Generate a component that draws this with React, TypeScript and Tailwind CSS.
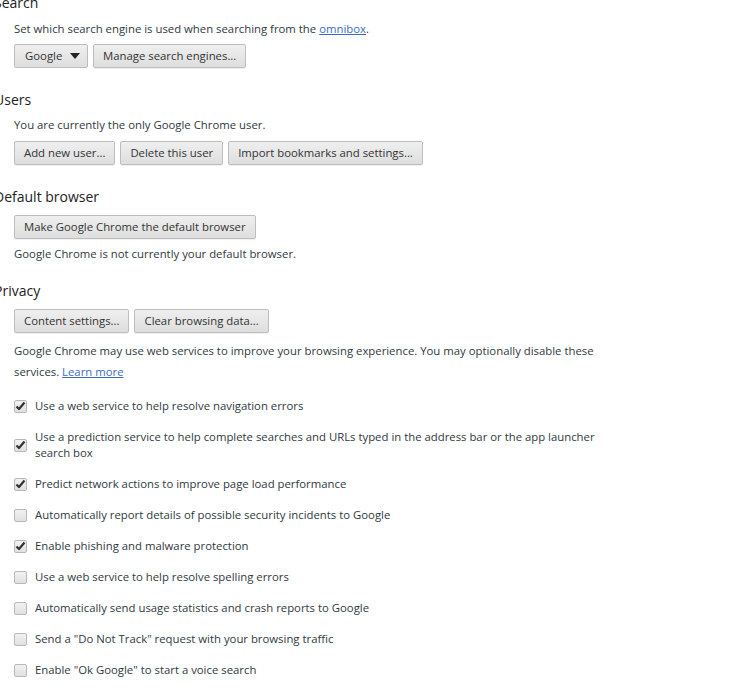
import type { ReactNode } from "react"

const Btn = ({ children }: { children: ReactNode }) => (
    <button className="h-6 px-[9px] rounded-[2px] border border-[#bdbdbd] bg-gradient-to-b from-[#efefef] to-[#dedede] text-[#333] shadow-[0_1px_0_rgba(0,0,0,0.06)] leading-none whitespace-nowrap">
        {children}
    </button>
)

const Heading = ({ children, className = "" }: { children: ReactNode; className?: string }) => (
    <h3 className={`ml-[-6px] text-[14px] leading-5 text-[#222] ${className}`}>{children}</h3>
)

const Check = ({ on }: { on: boolean }) => (
    <span className="shrink-0 w-[13px] h-[13px] rounded-[2px] border border-[#b8b8b8] bg-gradient-to-b from-[#f2f2f2] to-[#e0e0e0] flex items-center justify-center">
        {on && (
            <svg width="11" height="10" viewBox="0 0 11 10">
                <path d="M1.5 5.5 L4 8 L9.5 1.5" fill="none" stroke="#333" strokeWidth="2.2" strokeLinejoin="round" />
            </svg>
        )}
    </span>
)

const options: { on: boolean; label: ReactNode }[] = [
    { on: true, label: "Use a web service to help resolve navigation errors" },
    {
        on: true,
        label: (
            <>
                Use a prediction service to help complete searches and URLs typed in the address bar or the app launcher
                <br />
                search box
            </>
        ),
    },
    { on: true, label: "Predict network actions to improve page load performance" },
    { on: false, label: "Automatically report details of possible security incidents to Google" },
    { on: true, label: "Enable phishing and malware protection" },
    { on: false, label: "Use a web service to help resolve spelling errors" },
    { on: false, label: "Automatically send usage statistics and crash reports to Google" },
    { on: false, label: 'Send a "Do Not Track" request with your browsing traffic' },
    { on: false, label: 'Enable "Ok Google" to start a voice search' },
]

export default function App() {
    return (
        <div className="w-[737px] h-[693px] overflow-hidden bg-white text-[11.35px] text-[#303942] font-['Open_Sans',sans-serif]">
            <div className="mt-[-7px]">
                <Heading>Search</Heading>
                <div className="ml-[14px]">
                    <p className="mt-[8px] leading-4">
                        Set which search engine is used when searching from the{" "}
                        <a className="text-[#3b6cc4] underline">omnibox</a>.
                    </p>
                    <div className="mt-[7px] flex gap-[5px]">
                        <button className="h-6 w-[74px] pl-[10px] pr-[4px] rounded-[2px] border border-[#bdbdbd] bg-gradient-to-b from-[#efefef] to-[#dedede] text-[#333] flex items-center justify-between">
                            Google
                            <svg width="10" height="6" viewBox="0 0 10 6" className="mr-[3px]">
                                <path d="M0 0 H10 L5 6 Z" fill="#222" />
                            </svg>
                        </button>
                        <Btn>Manage search engines...</Btn>
                    </div>
                </div>

                <Heading className="mt-[22px]">Users</Heading>
                <div className="ml-[14px]">
                    <p className="mt-[7px] leading-4">You are currently the only Google Chrome user.</p>
                    <div className="mt-[8px] flex gap-[5px]">
                        <Btn>Add new user...</Btn>
                        <Btn>Delete this user</Btn>
                        <Btn>Import bookmarks and settings...</Btn>
                    </div>
                </div>

                <Heading className="mt-[22px]">Default browser</Heading>
                <div className="ml-[14px]">
                    <div className="mt-[8px]">
                        <Btn>Make Google Chrome the default browser</Btn>
                    </div>
                    <p className="mt-[7px] leading-4">Google Chrome is not currently your default browser.</p>
                </div>

                <Heading className="mt-[19px]">Privacy</Heading>
                <div className="ml-[14px]">
                    <div className="mt-[8px] flex gap-[5px]">
                        <Btn>Content settings...</Btn>
                        <Btn>Clear browsing data...</Btn>
                    </div>
                    <p className="mt-[7px] leading-[21px]">
                        Google Chrome may use web services to improve your browsing experience. You may optionally disable these
                        <br />
                        services. <a className="text-[#3b6cc4] underline">Learn more</a>
                    </p>
                    <ul className="mt-[16px] flex flex-col gap-[15px]">
                        {options.map((o, i) => (
                            <li key={i} className="flex items-center gap-[8px] leading-4">
                                <Check on={o.on} />
                                <span>{o.label}</span>
                            </li>
                        ))}
                    </ul>
                </div>
            </div>
        </div>
    )
}
